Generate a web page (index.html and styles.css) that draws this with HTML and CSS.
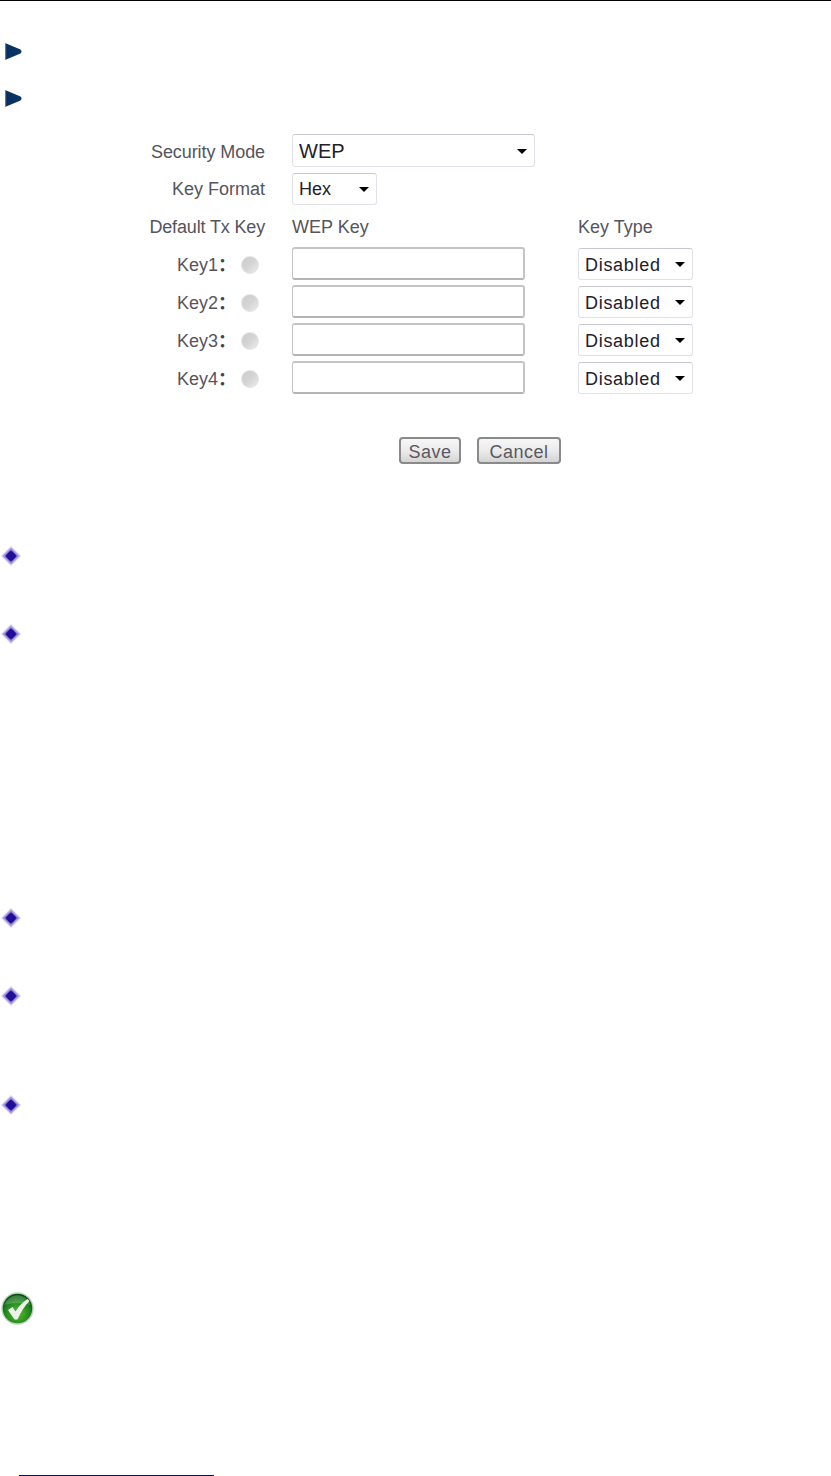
FILE: index.html
```html
<!DOCTYPE html>
<html lang="en">
<head>
<meta charset="utf-8">
<title>Wireless Security</title>
<link rel="stylesheet" href="styles.css">
</head>
<body>
<div class="page">
  <div class="top-rule"></div>
  <svg class="arrow arrow-first" viewBox="0 0 17 17"><defs><linearGradient id="ag" x1="0" x2="1" y1="0" y2="0"><stop offset="0" stop-color="#7f9ab8"/><stop offset=".1" stop-color="#08305f"/><stop offset="1" stop-color="#0a3568"/></linearGradient></defs><path d="M0 0 L15.5 6.5 L16.5 8 V9 L15.5 10.5 L0 17Z" fill="url(#ag)"/></svg>
  <svg class="arrow arrow-second" viewBox="0 0 17 17"><path d="M0 0 L15.5 6.5 L16.5 8 V9 L15.5 10.5 L0 17Z" fill="url(#ag)"/></svg>

  <form class="form-grid">
    <label class="lbl lbl-first">Security Mode</label>
    <div class="sel sel-wide"><select class="field field-big"><option>WEP</option></select></div>

    <label class="lbl">Key Format</label>
    <div class="sel sel-short"><select class="field field-hex"><option>Hex</option></select></div>

    <span class="lbl lbl-head">Default Tx Key</span>
    <span class="head">WEP Key</span>
    <span class="head">Key Type</span>

    <div class="key-cell"><label class="lbl lbl-key">Key1<span class="colon">：</span></label><input class="radio" type="radio" name="k" disabled></div>
    <input class="text-in" type="text">
    <div class="sel sel-type"><select class="field field-type"><option>Disabled</option></select></div>

    <div class="key-cell"><label class="lbl lbl-key">Key2<span class="colon">：</span></label><input class="radio" type="radio" name="k" disabled></div>
    <input class="text-in" type="text">
    <div class="sel sel-type"><select class="field field-type"><option>Disabled</option></select></div>

    <div class="key-cell"><label class="lbl lbl-key">Key3<span class="colon">：</span></label><input class="radio" type="radio" name="k" disabled></div>
    <input class="text-in" type="text">
    <div class="sel sel-type"><select class="field field-type"><option>Disabled</option></select></div>

    <div class="key-cell"><label class="lbl lbl-key">Key4<span class="colon">：</span></label><input class="radio" type="radio" name="k" disabled></div>
    <input class="text-in" type="text">
    <div class="sel sel-type"><select class="field field-type"><option>Disabled</option></select></div>
  </form>

  <div class="actions">
    <button class="btn btn-save" type="button">Save</button>
    <button class="btn btn-cancel" type="button">Cancel</button>
  </div>

  <svg class="diamond d1" viewBox="0 0 20 20"><use href="#dm"/></svg>
  <svg class="diamond d2" viewBox="0 0 20 20"><use href="#dm"/></svg>
  <svg class="diamond d3" viewBox="0 0 20 20"><use href="#dm"/></svg>
  <svg class="diamond d4" viewBox="0 0 20 20"><use href="#dm"/></svg>
  <svg class="diamond d5" viewBox="0 0 20 20"><use href="#dm"/></svg>

  <svg class="check" viewBox="0 0 33 33">
    <defs>
      <radialGradient id="cg" cx=".5" cy=".66" r=".62"><stop offset="0" stop-color="#62ba30"/><stop offset=".65" stop-color="#1f8a1e"/><stop offset="1" stop-color="#07540f"/></radialGradient>
      <symbol id="dm" viewBox="0 0 20 20">
        <path d="M10 0 L20 10 L10 20 L0 10Z" fill="#d9d2ef"/>
        <path d="M10 1.5 L18.5 10 L10 18.5 L1.5 10Z" fill="#a596dc"/>
        <path d="M10 3.5 L16.5 10 L10 16.5 L3.5 10Z" fill="#6a55c4"/>
        <path d="M10 5 Q10.8 5 11.5 5.8 L14.2 8.5 Q15 9.4 15 10 Q15 10.6 14.2 11.5 L11.5 14.2 Q10.8 15 10 15 Q9.2 15 8.5 14.2 L5.8 11.5 Q5 10.6 5 10 Q5 9.4 5.8 8.5 L8.5 5.8 Q9.2 5 10 5Z" fill="#1f0e9a"/>
      </symbol>
    </defs>
    <circle cx="16.5" cy="16.5" r="16.2" fill="#c4d2c0"/>
    <circle cx="16.5" cy="16.5" r="14.8" fill="url(#cg)"/>
    <path d="M3.5 13 A13.5 13.5 0 0 1 29.5 13 Q16 9 3.5 13Z" fill="#ffffff" opacity=".2"/>
    <path d="M7 18 L11.5 15 L14.5 19.5 Q19 12 26.5 7 L28.5 9 Q21.5 16 16.5 27.5 L13.5 27.5Z" fill="#eef3ea"/>
  </svg>

  <div class="foot-rule"></div>
</div>
</body>
</html>
```

FILE: styles.css
```css
* { box-sizing: border-box; }

html, body {
  margin: 0;
  padding: 0;
  background: #ffffff;
}

.page {
  width: 831px;
  height: 1476px;
  overflow: hidden;
  display: flex;
  flex-direction: column;
  align-items: flex-start;
  font-family: "Liberation Sans", "Noto Sans CJK SC", Arial, sans-serif;
  font-size: 18px;
  color: #56545c;
}

.top-rule {
  width: 100%;
  height: 1px;
  flex: none;
  background: #000000;
}

.arrow {
  display: block;
  flex: none;
  width: 17px;
  height: 17px;
  margin-left: 5px;
}
.arrow-first { margin-top: 42px; }
.arrow-second { margin-top: 30px; }

.form-grid {
  flex: none;
  margin: 27px 0 0 0;
  display: grid;
  grid-template-columns: 292px 286px 116px;
  grid-template-rows: 34px 32px 32px 33px 33px 33px 33px;
  row-gap: 5px;
  align-items: center;
}

.lbl {
  display: block;
  text-align: right;
  padding-right: 27px;
  white-space: nowrap;
}
.lbl-first { padding-top: 2px; letter-spacing: -.08px; }
.lbl-head { padding-top: 2px; letter-spacing: -.15px; }

.key-cell {
  display: flex;
  align-items: center;
  justify-content: flex-end;
  padding-top: 3px;
  padding-right: 33px;
  gap: 5px;
}
.lbl-key {
  padding-right: 0;
  line-height: 18px;
  height: 18px;
}
.colon {
  font-weight: 700;
  color: #44424a;
}

.head {
  display: block;
  white-space: nowrap;
  padding-top: 2px;
}

.sel {
  position: relative;
  display: block;
  align-self: start;
}
.sel::after {
  content: "";
  position: absolute;
  right: 8px;
  top: 50%;
  margin-top: -2px;
  border-style: solid;
  border-width: 5px 5.5px 0;
  border-color: #000000 transparent transparent;
  pointer-events: none;
}
.sel-wide { grid-column: 2 / 4; width: 243px; height: 33px; }
.sel-short { grid-column: 2 / 4; width: 85px; height: 32px; }
.sel-type { width: 115px; height: 32px; margin-top: 1px; }

.field {
  appearance: none;
  -webkit-appearance: none;
  display: block;
  width: 100%;
  height: 100%;
  margin: 0;
  background: #ffffff;
  border: 1px solid #e0e2ea;
  border-top-color: #c8c8d0;
  border-radius: 3px;
  font-family: "Liberation Sans", Arial, sans-serif;
  color: #23202c;
  padding: 0 0 0 6px;
}
.field-big { font-size: 20px; }
.field-hex { font-size: 18px; }
.field-type { font-size: 18px; letter-spacing: .7px; padding-top: 2px; }

.text-in {
  display: block;
  width: 233px;
  height: 33px;
  margin: 0;
  background: #ffffff;
  border: 1px solid #c4c4c4;
  border-top-width: 2px;
  border-bottom: 2px solid #b4b4b4;
  border-right-width: 2px;
  border-radius: 3px;
  padding: 0;
}

.radio {
  appearance: none;
  -webkit-appearance: none;
  display: block;
  flex: none;
  width: 18px;
  height: 18px;
  margin: 0;
  border: 1px solid #e4e4e4;
  border-radius: 50%;
  background: linear-gradient(135deg, #cccccc 0%, #d4d4d4 50%, #ececec 100%);
}

.actions {
  flex: none;
  display: flex;
  gap: 16px;
  margin: 43px 0 0 399px;
}

.btn {
  display: block;
  height: 27px;
  margin: 0;
  padding: 3px 0 0;
  border: 2px solid #8a8a8a;
  border-radius: 4px;
  background: linear-gradient(#f6f6f6 0%, #ececec 50%, #d4d4d4 100%);
  font-family: "Liberation Sans", Arial, sans-serif;
  font-size: 18px;
  letter-spacing: .5px;
  color: #5a5860;
}
.btn-save { width: 62px; }
.btn-cancel { width: 84px; }

.diamond {
  display: block;
  flex: none;
  width: 20px;
  height: 20px;
  margin-left: 1px;
}
.d1 { margin-top: 82px; }
.d2 { margin-top: 58px; }
.d3 { margin-top: 264px; }
.d4 { margin-top: 58px; }
.d5 { margin-top: 89px; }

.check {
  display: block;
  flex: none;
  width: 33px;
  height: 33px;
  margin: 177px 0 0 1px;
}

.foot-rule {
  flex: none;
  width: 195px;
  height: 1px;
  margin: 150px 0 0 19px;
  background: #0000c0;
}
```
